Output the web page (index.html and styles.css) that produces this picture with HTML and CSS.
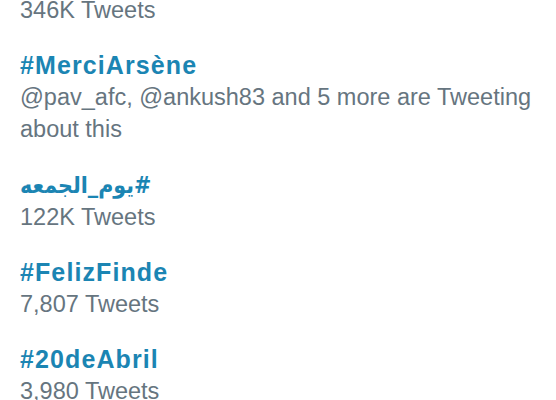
FILE: index.html
```html
<!DOCTYPE html>
<html>
<head>
<meta charset="utf-8">
<link rel="stylesheet" href="styles.css">
</head>
<body>
<ul class="trends">
  <li class="trend">
    <span class="meta">346K Tweets</span>
  </li>
  <li class="trend">
    <a class="tag">#MerciArsène</a>
    <span class="meta">@pav_afc, @ankush83 and 5 more are Tweeting about this</span>
  </li>
  <li class="trend">
    <a class="tag"><span class="rtl" dir="rtl">#يوم_الجمعه</span></a>
    <span class="meta">122K Tweets</span>
  </li>
  <li class="trend">
    <a class="tag">#FelizFinde</a>
    <span class="meta">7,807 Tweets</span>
  </li>
  <li class="trend">
    <a class="tag">#20deAbril</a>
    <span class="meta">3,980 Tweets</span>
  </li>
</ul>
</body>
</html>
```
FILE: styles.css
```css
html, body {
  margin: 0;
  padding: 0;
  background: #ffffff;
  overflow: hidden;
}
body {
  font-family: "Liberation Sans", Arial, "Noto Sans", sans-serif;
}
.trends {
  list-style: none;
  margin: -6px 0 0 0;
  padding: 0 20px;
  display: flex;
  flex-direction: column;
  gap: 23px;
}
.trend {
  display: flex;
  flex-direction: column;
  align-items: flex-start;
}
.tag {
  font-size: 25px;
  font-weight: bold;
  line-height: 32px;
  color: #1b85b3;
  letter-spacing: 1.1px;
}
.tag .rtl {
  letter-spacing: 0;
  font-size: 23px;
  font-family: "DejaVu Sans Condensed", "DejaVu Sans", sans-serif;
}
.meta {
  font-size: 23.5px;
  line-height: 32px;
  color: #66757f;
}
```
